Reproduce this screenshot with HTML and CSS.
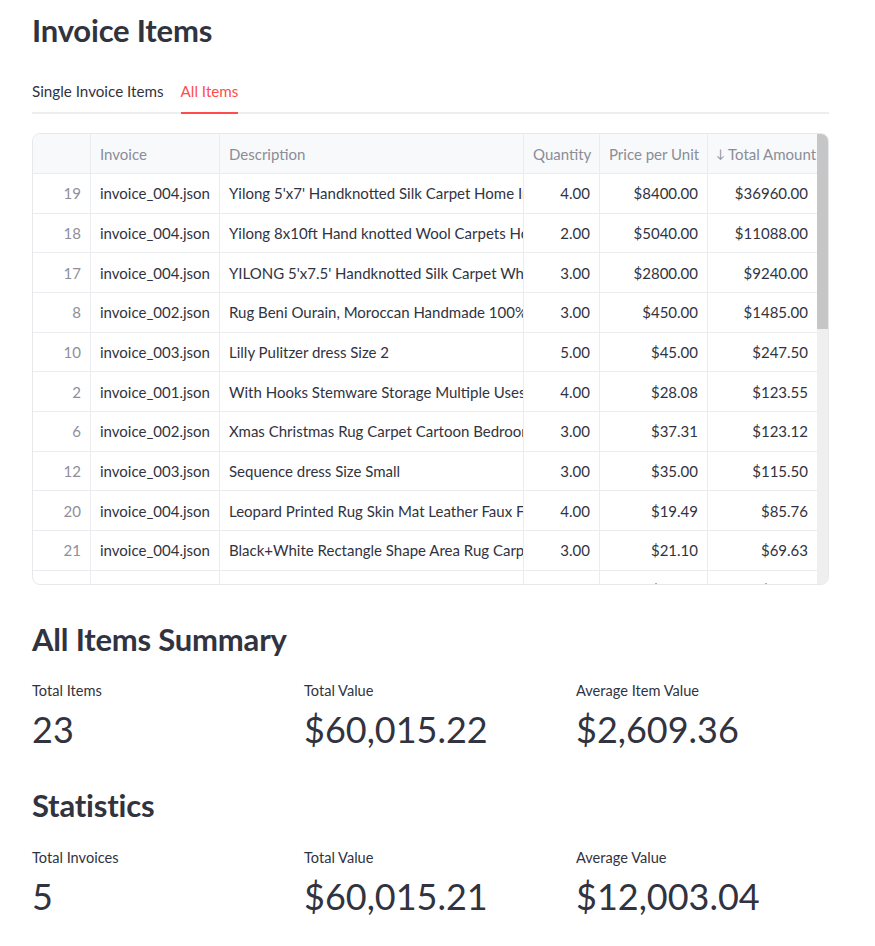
FILE: index.html
```html
<!DOCTYPE html>
<html>
<head>
<meta charset="utf-8">
<link rel="stylesheet" href="styles.css">
</head>
<body>
<main class="page">
  <h1 class="title">Invoice Items</h1>
  <div class="tabs">
    <div class="tab">Single Invoice Items</div>
    <div class="tab active">All Items</div>
  </div>

  <div class="grid-wrap">
    <div class="grid">
      <div class="row head">
        <div class="c idx"></div>
        <div class="c inv">Invoice</div>
        <div class="c desc">Description</div>
        <div class="c qty">Quantity</div>
        <div class="c price">Price per Unit</div>
        <div class="c total"><span class="arrow">↓</span>Total Amount</div>
      </div>
      <div class="row"><div class="c idx">19</div><div class="c inv">invoice_004.json</div><div class="c desc">Yilong 5'x7' Handknotted Silk Carpet Home Interior</div><div class="c qty num">4.00</div><div class="c price num">$8400.00</div><div class="c total num">$36960.00</div></div>
      <div class="row"><div class="c idx">18</div><div class="c inv">invoice_004.json</div><div class="c desc">Yilong 8x10ft Hand knotted Wool Carpets Home</div><div class="c qty num">2.00</div><div class="c price num">$5040.00</div><div class="c total num">$11088.00</div></div>
      <div class="row"><div class="c idx">17</div><div class="c inv">invoice_004.json</div><div class="c desc">YILONG 5'x7.5' Handknotted Silk Carpet Whimsical</div><div class="c qty num">3.00</div><div class="c price num">$2800.00</div><div class="c total num">$9240.00</div></div>
      <div class="row"><div class="c idx">8</div><div class="c inv">invoice_002.json</div><div class="c desc">Rug Beni Ourain, Moroccan Handmade 100% Wool</div><div class="c qty num">3.00</div><div class="c price num">$450.00</div><div class="c total num">$1485.00</div></div>
      <div class="row"><div class="c idx">10</div><div class="c inv">invoice_003.json</div><div class="c desc">Lilly Pulitzer dress Size 2</div><div class="c qty num">5.00</div><div class="c price num">$45.00</div><div class="c total num">$247.50</div></div>
      <div class="row"><div class="c idx">2</div><div class="c inv">invoice_001.json</div><div class="c desc">With Hooks Stemware Storage Multiple Uses Iron</div><div class="c qty num">4.00</div><div class="c price num">$28.08</div><div class="c total num">$123.55</div></div>
      <div class="row"><div class="c idx">6</div><div class="c inv">invoice_002.json</div><div class="c desc">Xmas Christmas Rug Carpet Cartoon Bedroom</div><div class="c qty num">3.00</div><div class="c price num">$37.31</div><div class="c total num">$123.12</div></div>
      <div class="row"><div class="c idx">12</div><div class="c inv">invoice_003.json</div><div class="c desc">Sequence dress Size Small</div><div class="c qty num">3.00</div><div class="c price num">$35.00</div><div class="c total num">$115.50</div></div>
      <div class="row"><div class="c idx">20</div><div class="c inv">invoice_004.json</div><div class="c desc">Leopard Printed Rug Skin Mat Leather Faux Fur</div><div class="c qty num">4.00</div><div class="c price num">$19.49</div><div class="c total num">$85.76</div></div>
      <div class="row"><div class="c idx">21</div><div class="c inv">invoice_004.json</div><div class="c desc">Black+White Rectangle Shape Area Rug Carpet</div><div class="c qty num">3.00</div><div class="c price num">$21.10</div><div class="c total num">$69.63</div></div>
      <div class="row"><div class="c idx">3</div><div class="c inv">invoice_001.json</div><div class="c desc">Wine Glass Holder Rack Under Cabinet</div><div class="c qty num">2.00</div><div class="c price num">$25.00</div><div class="c total num">$55.00</div></div>
    </div>
    <div class="scrollbar"><div class="thumb"></div></div>
  </div>

  <h2 class="section">All Items Summary</h2>
  <div class="metrics">
    <div class="metric"><div class="label">Total Items</div><div class="value">23</div></div>
    <div class="metric"><div class="label">Total Value</div><div class="value">$60,015.22</div></div>
    <div class="metric"><div class="label">Average Item Value</div><div class="value">$2,609.36</div></div>
  </div>

  <h2 class="section second">Statistics</h2>
  <div class="metrics second">
    <div class="metric"><div class="label">Total Invoices</div><div class="value">5</div></div>
    <div class="metric"><div class="label">Total Value</div><div class="value">$60,015.21</div></div>
    <div class="metric"><div class="label">Average Value</div><div class="value">$12,003.04</div></div>
  </div>
</main>
</body>
</html>
```

FILE: styles.css
```css
* { box-sizing: border-box; }
html, body { margin: 0; padding: 0; background: #fff; }
body {
  font-family: "Source Sans Pro", Lato, "Noto Sans", sans-serif;
  color: #31333f;
}
.page {
  width: 797px;
  margin-left: 32px;
  padding-top: 10px;
}
.title {
  margin: 0;
  font-size: 31px;
  font-weight: 700;
  line-height: 40px;
  letter-spacing: -0.2px;
}
.tabs {
  margin-top: 20px;
  display: flex;
  gap: 17px;
  border-bottom: 2px solid #eceef1;
  height: 44px;
}
.tab {
  font-size: 15.2px;
  line-height: 20px;
  padding-top: 11px;
  height: 44px;
  margin-bottom: -2px;
  border-bottom: 2px solid transparent;
}
.tab.active {
  color: #ff4b4b;
  border-bottom-color: #ff4b4b;
}

.grid-wrap {
  margin-top: 19px;
  height: 452px;
  border: 1px solid #e6e8ec;
  border-radius: 8px;
  overflow: hidden;
  display: flex;
}
.grid {
  flex: 1;
  overflow: hidden;
  font-size: 15px;
}
.row {
  display: flex;
  height: 39.67px;
  border-bottom: 1px solid #ebecef;
}
.row.head {
  height: 40px;
  background: #f8f9fb;
  color: #8a8d98;
}
.c {
  flex: none;
  white-space: nowrap;
  overflow: hidden;
  padding: 0 9px;
  display: flex;
  align-items: center;
  border-right: 1px solid #ebecef;
}
.c.num { justify-content: flex-end; }
.idx { width: 58px; justify-content: flex-end; color: #8d909a; padding-right: 9px; }
.inv { width: 129px; }
.desc { width: 304px; }
.qty { width: 76px; }
.price { width: 108px; }
.total { width: 110px; border-right: none; padding-right: 10px; }
.head .c { padding-left: 9px; }
.head .total { padding-left: 8px; }
.arrow { font-size: 12px; margin-right: 3px; }
.scrollbar {
  width: 11px;
  flex: none;
  background: #efefef;
}
.thumb {
  height: 195px;
  background: #c6c6c6;
}

.section {
  margin: 34px 0 0;
  font-size: 31px;
  font-weight: 700;
  line-height: 40px;
  letter-spacing: -0.2px;
}
.section.second { margin-top: 31px; }
.metrics {
  margin-top: 21px;
  display: grid;
  grid-template-columns: 256px 256px 1fr;
  column-gap: 16px;
}
.metrics.second { margin-top: 22px; }
.label {
  font-size: 14.6px;
  line-height: 22px;
}
.value {
  margin-top: 2px;
  font-size: 36px;
  line-height: 50px;
}
```
